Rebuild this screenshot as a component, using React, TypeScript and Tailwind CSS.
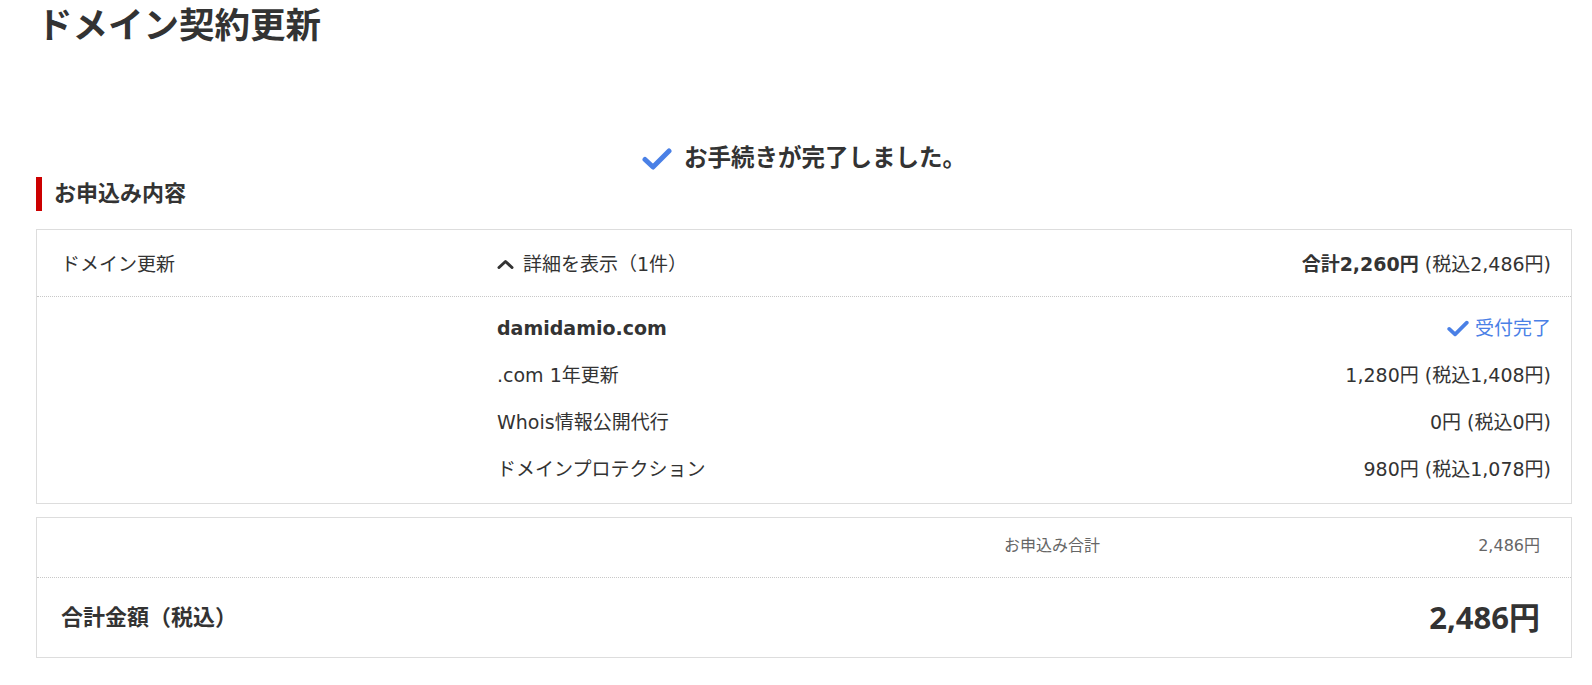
import React from "react";

const font = { fontFamily: '"DejaVu Sans", "Noto Sans CJK JP", sans-serif' };
const openFont = { fontFamily: '"Open Sans", "Noto Sans CJK JP", sans-serif' };

function Check({ w, h }: { w: number; h: number }) {
  return (
    <svg width={w} height={h} viewBox="0 0 30 22" fill="none">
      <path d="M3 11.5 L11 19 L27 3" stroke="#4a80e6" strokeWidth="5" strokeLinecap="round" strokeLinejoin="round" />
    </svg>
  );
}

function Chevron() {
  return (
    <svg width="17" height="10" viewBox="0 0 17 10" fill="none">
      <path d="M2 8.5 L8.5 2.5 L15 8.5" stroke="#333" strokeWidth="3" strokeLinecap="round" strokeLinejoin="round" />
    </svg>
  );
}

const items = [
  { name: ".com 1年更新", price: "1,280円 (税込1,408円)" },
  { name: "Whois情報公開代行", price: "0円 (税込0円)" },
  { name: "ドメインプロテクション", price: "980円 (税込1,078円)" },
];

export default function App() {
  return (
    <div className="bg-white text-[#333] min-h-[685px] pl-[36px] pr-[20px]" style={font}>
      <div className="h-[51px] flex items-center pl-[1px]">
        <h1 className="text-[35.5px] font-bold leading-none">ドメイン契約更新</h1>
      </div>

      <div className="mt-[93px] h-[30px] flex items-center justify-center gap-[12px]">
        <Check w={30} h={22} />
        <span className="text-[23.5px] font-bold leading-none">お手続きが完了しました。</span>
      </div>

      <div className="mt-[3px] h-[34px] flex items-center border-l-[6px] border-[#cc0000] pl-[12px]">
        <span className="text-[22px] font-bold leading-none">お申込み内容</span>
      </div>

      <div className="mt-[18px] border border-[#dddddd]">
        <div className="h-[67px] flex items-center pl-[24px] pr-[20px] border-b border-dotted border-[#c8c8c8] text-[19px]">
          <div className="w-[436px] shrink-0 pt-[2px]">ドメイン更新</div>
          <div className="flex items-center gap-[9px] pt-[2px]">
            <Chevron />
            <span>詳細を表示（1件）</span>
          </div>
          <div className="ml-auto pt-[2px]">
            <span className="font-bold">合計2,260円</span> (税込2,486円)
          </div>
        </div>
        <div className="pt-[8px] pb-[10px] pl-[24px] pr-[20px] text-[19px]">
          <div className="h-[47px] flex items-center">
            <div className="w-[436px] shrink-0" />
            <div className="font-bold">damidamio.com</div>
            <div className="ml-auto flex items-center gap-[6px] text-[#4a80e6]">
              <Check w={22} h={17} />
              <span>受付完了</span>
            </div>
          </div>
          {items.map((it) => (
            <div key={it.name} className="h-[47px] flex items-center">
              <div className="w-[436px] shrink-0" />
              <div>{it.name}</div>
              <div className="ml-auto">{it.price}</div>
            </div>
          ))}
        </div>
      </div>

      <div className="mt-[13px] border border-[#dddddd]">
        <div className="h-[60px] flex items-center pr-[31px] border-b border-dotted border-[#c8c8c8] text-[16px] text-[#666]">
          <div className="ml-auto pb-[4px]">お申込み合計</div>
          <div className="w-[440px] text-right pb-[4px]">2,486円</div>
        </div>
        <div className="h-[79px] flex items-center pl-[24px] pr-[31px]">
          <div className="text-[22px] font-bold">合計金額（税込）</div>
          <div className="ml-auto text-[31px] font-bold" style={openFont}>2,486円</div>
        </div>
      </div>
    </div>
  );
}
